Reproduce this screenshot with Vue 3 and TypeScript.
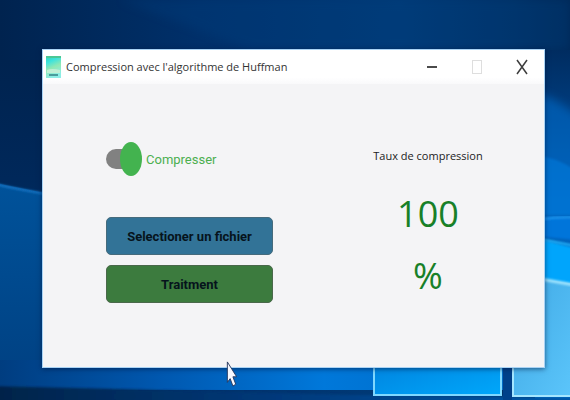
<script setup lang="ts">
import { ref } from 'vue'

const compress = ref<boolean>(true)
const rate = ref<number>(100)
</script>

<template>
  <div class="desktop">
    <svg class="wallpaper" viewBox="0 0 570 400" preserveAspectRatio="none" aria-hidden="true">
      <defs>
        <linearGradient id="sky" x1="0" y1="0" x2="1" y2="0">
          <stop offset="0" stop-color="#00234f" />
          <stop offset="0.35" stop-color="#00306a" />
          <stop offset="0.7" stop-color="#003a77" />
          <stop offset="0.9" stop-color="#003166" />
          <stop offset="1" stop-color="#002958" />
        </linearGradient>
        <linearGradient id="left" x1="0" y1="0" x2="0" y2="1">
          <stop offset="0" stop-color="#00234f" />
          <stop offset="0.35" stop-color="#00285a" />
          <stop offset="1" stop-color="#003c7c" />
        </linearGradient>
        <linearGradient id="beam" x1="0" y1="0" x2="0" y2="1">
          <stop offset="0" stop-color="#00529a" />
          <stop offset="1" stop-color="#003f80" />
        </linearGradient>
        <linearGradient id="right" x1="0" y1="0" x2="0" y2="1">
          <stop offset="0" stop-color="#002c60" />
          <stop offset="0.2" stop-color="#003f82" />
          <stop offset="0.6" stop-color="#0068c4" />
          <stop offset="1" stop-color="#007fe0" />
        </linearGradient>
        <linearGradient id="floor" x1="0" y1="0" x2="1" y2="0">
          <stop offset="0" stop-color="#003d80" />
          <stop offset="0.3" stop-color="#0058b0" />
          <stop offset="0.6" stop-color="#0078da" />
          <stop offset="1" stop-color="#0067c0" />
        </linearGradient>
        <linearGradient id="base" x1="0" y1="0" x2="1" y2="0">
          <stop offset="0" stop-color="#002348" />
          <stop offset="0.5" stop-color="#003a7c" />
          <stop offset="1" stop-color="#0058a8" />
        </linearGradient>
        <linearGradient id="pane" x1="0" y1="0" x2="1" y2="1">
          <stop offset="0" stop-color="#0080dc" />
          <stop offset="1" stop-color="#00a8fb" />
        </linearGradient>
        <linearGradient id="paneLight" x1="0" y1="0" x2="1" y2="1">
          <stop offset="0" stop-color="#3fa8e4" />
          <stop offset="1" stop-color="#5cc6fb" />
        </linearGradient>
        <filter id="soft" x="-20%" y="-20%" width="140%" height="140%">
          <feGaussianBlur stdDeviation="1" />
        </filter>
        <filter id="wide" x="-20%" y="-20%" width="140%" height="140%">
          <feGaussianBlur stdDeviation="5" />
        </filter>
      </defs>
      <rect width="570" height="400" fill="url(#sky)" />
      <path d="M120 0 L250 50 L570 50 L570 0 Z" fill="#003f80" opacity="0.3" filter="url(#wide)" />
      <rect y="60" width="60" height="340" fill="url(#left)" />
      <path d="M0 184 L60 196 V400 H0 Z" fill="url(#beam)" />
      <path d="M-5 184 Q20 190 60 196" fill="none" stroke="#1b78c8" stroke-width="2" filter="url(#soft)" />
      <rect x="535" y="50" width="35" height="350" fill="url(#right)" />
      <path d="M535 92 Q560 100 580 118 V230 H535 Z" fill="#0070d0" opacity="0.55" filter="url(#wide)" />
      <path d="M535 155 Q558 158 575 170 V215 H535 Z" fill="#0080e4" opacity="0.5" filter="url(#soft)" />
      <path d="M535 219 Q555 216 575 218 V240 L535 236 Z" fill="#0074da" filter="url(#soft)" />
      <path d="M535 220 Q555 217 575 217" fill="none" stroke="#239bf2" stroke-width="2" filter="url(#soft)" />
      <path d="M535 238 L575 248 V290 H535 Z" fill="#00a5fc" filter="url(#soft)" />
      <path d="M535 238 L575 246" stroke="#28baff" stroke-width="2" filter="url(#soft)" />
      <rect y="360" width="540" height="30" fill="url(#floor)" />
      <path d="M-10 386 L120 389 L350 395 L580 397 V410 H-10 Z" fill="url(#base)" filter="url(#soft)" />
      <path d="M374 355 H502 V396 H374 Z" fill="url(#pane)" />
      <path d="M374 355 V395 H501 V355" fill="none" stroke="#7fd8ff" stroke-width="2" />
      <rect x="503" y="360" width="9" height="40" fill="#00408a" />
      <path d="M513 278 H535 L575 284 V396 H513 Z" fill="url(#paneLight)" />
      <path d="M513 355 V396 H575" fill="none" stroke="#a4e6ff" stroke-width="2" />
      <path d="M535 278 L575 285" stroke="#a0e5ff" stroke-width="3" filter="url(#soft)" />
    </svg>

    <main class="window">
      <header class="titlebar">
        <svg class="app-icon" viewBox="0 0 15 22" preserveAspectRatio="none" aria-hidden="true">
          <defs>
            <linearGradient id="iconFill" x1="0" y1="0" x2="0.3" y2="1">
              <stop offset="0" stop-color="#2fd0b0" />
              <stop offset="0.3" stop-color="#3ee3dc" />
              <stop offset="0.6" stop-color="#90e8b4" />
              <stop offset="1" stop-color="#8deee6" />
            </linearGradient>
          </defs>
          <rect width="15" height="22" fill="url(#iconFill)" />
          <path d="M0 1 H15" stroke="#4cc795" stroke-width="2" />
          <path d="M1 14 Q6 12 14 14 V17 H1 Z" fill="#c1efd5" />
          <path d="M3 19 H12" stroke="#4a9c9c" stroke-width="2" />
        </svg>
        <h1 class="title">Compression avec l'algorithme de Huffman</h1>
        <div class="controls">
          <button class="control" type="button" aria-label="Réduire">
            <svg width="12" height="18" viewBox="0 0 12 18"><path d="M1 9 H11" stroke="#4b4b4b" stroke-width="2" /></svg>
          </button>
          <button class="control" type="button" aria-label="Agrandir" disabled>
            <svg width="12" height="18" viewBox="0 0 12 18"><rect x="1.5" y="2.5" width="9" height="13" fill="none" stroke="#dedede" /></svg>
          </button>
          <button class="control" type="button" aria-label="Fermer">
            <svg width="12" height="18" viewBox="0 0 12 18"><path d="M1 2 L11 16 M11 2 L1 16" stroke="#3d3d3d" stroke-width="1.5" /></svg>
          </button>
        </div>
      </header>

      <div class="content">
        <section class="actions">
          <label class="switch">
            <input v-model="compress" class="switch-input" type="checkbox" role="switch" />
            <span>Compresser</span>
          </label>
          <button class="action file" type="button">Selectioner un fichier</button>
          <button class="action run" type="button">Traitment</button>
        </section>
        <section class="result">
          <h2 class="result-label">Taux de compression</h2>
          <p class="result-value">{{ rate }}</p>
          <p class="result-value">%</p>
        </section>
      </div>
    </main>

    <svg class="pointer" viewBox="0 0 12 28" aria-hidden="true">
      <path d="M1 1 V23 L4 19 L7 27 L10 25 L7 17 H11 Z" fill="#f6f8ff" stroke="#25365c" stroke-width="1" />
    </svg>
  </div>
</template>

<style>
body {
  margin: 0;
}
</style>

<style scoped>
.desktop {
  position: relative;
  box-sizing: border-box;
  display: flex;
  min-height: 100vh;
  padding: 49px 25px 32px 42px;
  overflow: hidden;
  font-family: "Open Sans", "Noto Sans", sans-serif;
}

.wallpaper {
  position: absolute;
  inset: 0;
  width: 100%;
  height: 100%;
}

.window {
  position: relative;
  box-sizing: border-box;
  display: flex;
  flex: 1;
  flex-direction: column;
  border: 1px solid #a9d3f5;
  background: #f4f4f6;
  box-shadow: 0 1px 5px rgba(0, 20, 60, 0.6);
}

.titlebar {
  display: flex;
  align-items: center;
  height: 34px;
  padding-left: 3px;
  background: linear-gradient(#fff 80%, #f9f9fb);
}

.app-icon {
  width: 15px;
  height: 22px;
}

.title {
  flex: 1;
  margin: 0 0 0 5px;
  color: #333;
  font-size: 11px;
  font-weight: 400;
  line-height: 18px;
  white-space: nowrap;
}

.controls {
  display: flex;
}

.control {
  display: grid;
  place-items: center;
  width: 45px;
  height: 34px;
  padding: 0;
  border: 0;
  background: none;
}

.content {
  display: grid;
  grid-template-columns: 167px 116px;
  justify-content: space-between;
  padding: 56px 58px 0 63px;
}

.actions {
  display: flex;
  flex-direction: column;
}

.switch {
  display: flex;
  align-items: center;
  gap: 3px;
  height: 38px;
  margin-bottom: 39px;
  color: #4caf50;
  font-family: Roboto, sans-serif;
  font-size: 13px;
}

.switch-input {
  position: relative;
  width: 37px;
  height: 34px;
  margin: 0;
  appearance: none;
}

.switch-input::before {
  position: absolute;
  top: 7px;
  left: 0;
  width: 32px;
  height: 20px;
  border-radius: 10px;
  background: #818181;
  content: "";
}

.switch-input::after {
  position: absolute;
  top: 0;
  left: 0;
  width: 22px;
  height: 34px;
  border-radius: 50%;
  background: #fafafa;
  content: "";
}

.switch-input:checked::after {
  left: 14px;
  background: #43b34f;
}

.action {
  height: 38px;
  padding: 0;
  border: 1px solid #466b7c;
  border-radius: 5px;
  color: #06131c;
  font-family: Roboto, sans-serif;
  font-size: 13px;
  font-weight: 700;
}

.file {
  margin-bottom: 10px;
  background: #327397;
}

.run {
  border-color: #4a684b;
  background: #3c7b3e;
}

.result {
  display: flex;
  flex-direction: column;
  align-items: center;
  padding-top: 7px;
}

.result-label {
  margin: 0 0 18px;
  color: #222;
  font-size: 11px;
  font-weight: 400;
  line-height: 18px;
  white-space: nowrap;
}

.result-value {
  margin: 0;
  color: #188028;
  font-size: 36px;
  line-height: 62px;
}

.pointer {
  position: absolute;
  top: 361px;
  left: 226px;
  width: 12px;
  height: 26px;
}
</style>
